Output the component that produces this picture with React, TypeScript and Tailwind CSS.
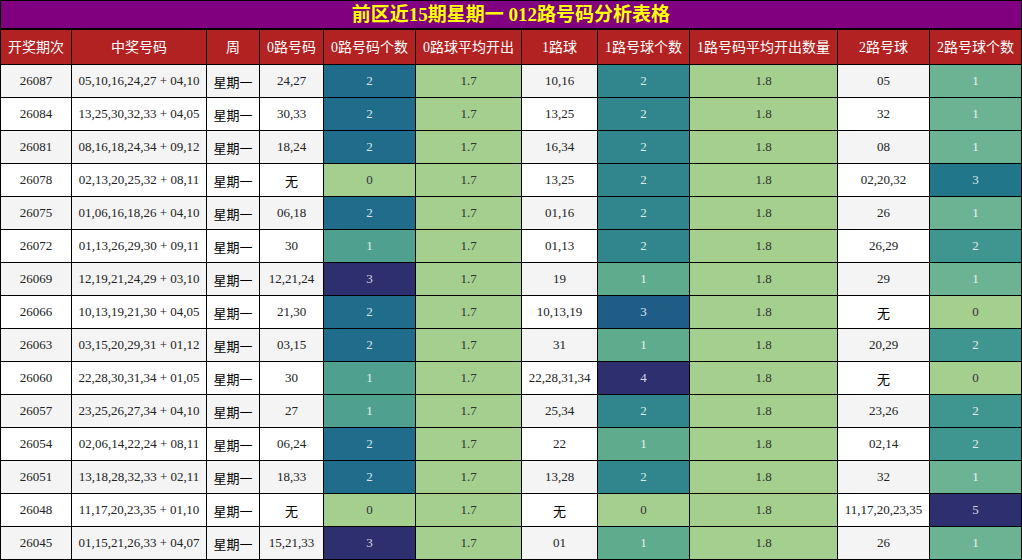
const HEADERS = [
  '开奖期次',
  '中奖号码',
  '周',
  '0路号码',
  '0路号码个数',
  '0路球平均开出',
  '1路球',
  '1路号球个数',
  '1路号码平均开出数量',
  '2路号球',
  '2路号球个数',
]

type Row = [string, string, string, number, string, number, string, number]

// 期次, 中奖号码, 0路, 0路个数, 1路, 1路个数, 2路, 2路个数
const ROWS: Row[] = [
  ['26087', '05,10,16,24,27 + 04,10', '24,27', 2, '10,16', 2, '05', 1],
  ['26084', '13,25,30,32,33 + 04,05', '30,33', 2, '13,25', 2, '32', 1],
  ['26081', '08,16,18,24,34 + 09,12', '18,24', 2, '16,34', 2, '08', 1],
  ['26078', '02,13,20,25,32 + 08,11', '无', 0, '13,25', 2, '02,20,32', 3],
  ['26075', '01,06,16,18,26 + 04,10', '06,18', 2, '01,16', 2, '26', 1],
  ['26072', '01,13,26,29,30 + 09,11', '30', 1, '01,13', 2, '26,29', 2],
  ['26069', '12,19,21,24,29 + 03,10', '12,21,24', 3, '19', 1, '29', 1],
  ['26066', '10,13,19,21,30 + 04,05', '21,30', 2, '10,13,19', 3, '无', 0],
  ['26063', '03,15,20,29,31 + 01,12', '03,15', 2, '31', 1, '20,29', 2],
  ['26060', '22,28,30,31,34 + 01,05', '30', 1, '22,28,31,34', 4, '无', 0],
  ['26057', '23,25,26,27,34 + 04,10', '27', 1, '25,34', 2, '23,26', 2],
  ['26054', '02,06,14,22,24 + 08,11', '06,24', 2, '22', 1, '02,14', 2],
  ['26051', '13,18,28,32,33 + 02,11', '18,33', 2, '13,28', 2, '32', 1],
  ['26048', '11,17,20,23,35 + 01,10', '无', 0, '无', 0, '11,17,20,23,35', 5],
  ['26045', '01,15,21,26,33 + 04,07', '15,21,33', 3, '01', 1, '26', 1],
]

// colour scale per column, keyed by count
const ZERO_SCALE: Record<number, string> = {
  0: 'bg-[#a5cf8f] text-[#333]',
  1: 'bg-[#50a08f] text-[#e4efe8]',
  2: 'bg-[#1f6d8a] text-[#d9e4ea]',
  3: 'bg-[#2d2f6e] text-[#d6d8e6]',
}
const ONE_SCALE: Record<number, string> = {
  0: 'bg-[#a5cf8f] text-[#333]',
  1: 'bg-[#5fab8e] text-[#e6f0e9]',
  2: 'bg-[#31858c] text-[#dde9ea]',
  3: 'bg-[#1f5d87] text-[#d9e2ea]',
  4: 'bg-[#2d2f6e] text-[#d6d8e6]',
}
const TWO_SCALE: Record<number, string> = {
  0: 'bg-[#a5cf8f] text-[#333]',
  1: 'bg-[#6bb393] text-[#e8f2ec]',
  2: 'bg-[#3f958f] text-[#e0ecea]',
  3: 'bg-[#22768a] text-[#dae6ea]',
  5: 'bg-[#2d2f6e] text-[#d6d8e6]',
}

const cell = 'flex items-center justify-center text-center whitespace-nowrap'

export default function App() {
  return (
    <div className="w-[1022px] h-[560px] bg-white font-['Liberation_Serif','Noto_Sans_CJK_SC',serif]">
      {/* Title */}
      <div className="h-[29px] border border-black bg-[#800080] flex items-center justify-center">
        <span className="text-[19px] font-bold text-[#ffff00] leading-none">
          前区近15期星期一 012路号码分析表格
        </span>
      </div>

      {/* Table */}
      <div className="grid grid-cols-[70px_134px_52px_63px_91px_105px_75px_91px_147px_91px_91px] grid-rows-[34px_repeat(15,32px)] gap-px p-px bg-black">
        {HEADERS.map(h => (
          <div key={h} className={`${cell} bg-[#b22222] text-white text-[14px]`}>
            {h}
          </div>
        ))}

        {ROWS.map((r, i) => {
          const base = i % 2 === 0 ? 'bg-[#f4f4f4]' : 'bg-white'
          const [issue, nums, zero, zc, one, oc, two, tc] = r
          return [
            <div key={`${issue}-a`} className={`${cell} ${base} text-[13px] text-[#222]`}>{issue}</div>,
            <div key={`${issue}-b`} className={`${cell} ${base} text-[13px] text-[#222]`}>{nums}</div>,
            <div key={`${issue}-c`} className={`${cell} ${base} text-[13px] text-black pt-[4px]`}>星期一</div>,
            <div key={`${issue}-d`} className={`${cell} ${base} text-[13px] ${zero === '无' ? 'text-black pt-[4px]' : 'text-[#222]'}`}>{zero}</div>,
            <div key={`${issue}-e`} className={`${cell} text-[13px] ${ZERO_SCALE[zc]}`}>{zc}</div>,
            <div key={`${issue}-f`} className={`${cell} text-[13px] bg-[#a5cf8f] text-[#333]`}>1.7</div>,
            <div key={`${issue}-g`} className={`${cell} ${base} text-[13px] ${one === '无' ? 'text-black pt-[4px]' : 'text-[#222]'}`}>{one}</div>,
            <div key={`${issue}-h`} className={`${cell} text-[13px] ${ONE_SCALE[oc]}`}>{oc}</div>,
            <div key={`${issue}-i`} className={`${cell} text-[13px] bg-[#a5cf8f] text-[#333]`}>1.8</div>,
            <div key={`${issue}-j`} className={`${cell} ${base} text-[13px] ${two === '无' ? 'text-black pt-[4px]' : 'text-[#222]'}`}>{two}</div>,
            <div key={`${issue}-k`} className={`${cell} text-[13px] ${TWO_SCALE[tc]}`}>{tc}</div>,
          ]
        })}
      </div>
    </div>
  )
}
